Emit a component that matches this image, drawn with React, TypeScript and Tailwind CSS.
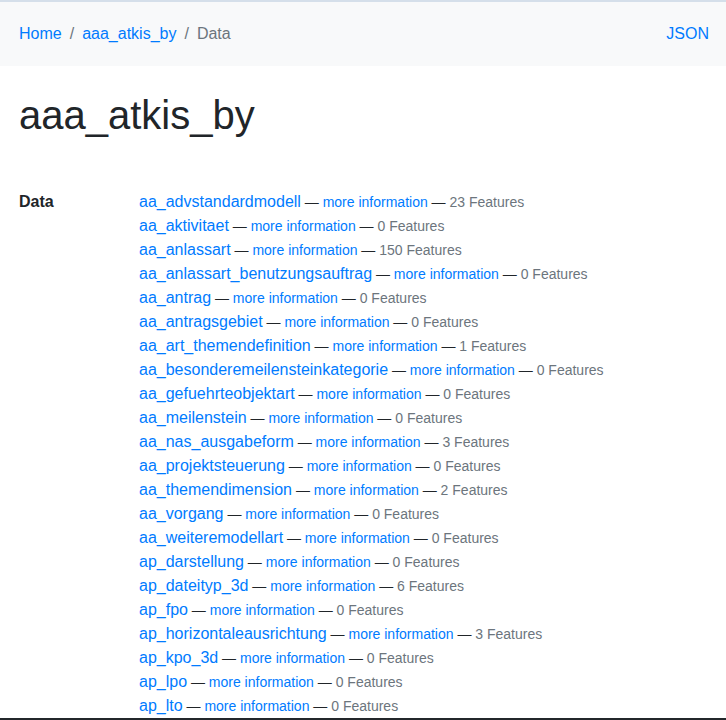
import React from 'react';

interface Collection {
  id: string;
  count: number;
}

const collections: Collection[] = [
  { id: 'aa_advstandardmodell', count: 23 },
  { id: 'aa_aktivitaet', count: 0 },
  { id: 'aa_anlassart', count: 150 },
  { id: 'aa_anlassart_benutzungsauftrag', count: 0 },
  { id: 'aa_antrag', count: 0 },
  { id: 'aa_antragsgebiet', count: 0 },
  { id: 'aa_art_themendefinition', count: 1 },
  { id: 'aa_besonderemeilensteinkategorie', count: 0 },
  { id: 'aa_gefuehrteobjektart', count: 0 },
  { id: 'aa_meilenstein', count: 0 },
  { id: 'aa_nas_ausgabeform', count: 3 },
  { id: 'aa_projektsteuerung', count: 0 },
  { id: 'aa_themendimension', count: 2 },
  { id: 'aa_vorgang', count: 0 },
  { id: 'aa_weiteremodellart', count: 0 },
  { id: 'ap_darstellung', count: 0 },
  { id: 'ap_dateityp_3d', count: 6 },
  { id: 'ap_fpo', count: 0 },
  { id: 'ap_horizontaleausrichtung', count: 3 },
  { id: 'ap_kpo_3d', count: 0 },
  { id: 'ap_lpo', count: 0 },
  { id: 'ap_lto', count: 0 },
];

export default function App() {
  return (
    <div
      className="h-[720px] overflow-hidden border-b-2 border-[#23272b] bg-white text-[#212529]"
      style={{ fontFamily: '"Liberation Sans", Arial, sans-serif' }}
    >
      {/* Breadcrumb */}
      <nav className="flex h-[66px] items-center justify-between border-t-2 border-[#d5dfea] bg-[#f8f9fa] pl-[19px] pr-[17px] text-base">
        <div className="flex items-center">
          <a href="#" className="text-[#007bff]">Home</a>
          <span className="px-2 text-[#6c757d]">/</span>
          <a href="#" className="text-[#007bff]">aaa_atkis_by</a>
          <span className="px-2 text-[#6c757d]">/</span>
          <span className="text-[#6c757d]">Data</span>
        </div>
        <a href="#" className="text-[#007bff]">JSON</a>
      </nav>

      <h1 className="mt-[25px] px-[19px] text-[40px] leading-[48px] font-normal">aaa_atkis_by</h1>

      {/* Collections */}
      <div className="mt-[51px] flex px-[19px]">
        <div className="w-[120px] shrink-0 text-base leading-6 font-bold">Data</div>
        <ul className="flex flex-col">
          {collections.map((c) => (
            <li key={c.id} className="whitespace-nowrap text-base leading-6">
              <a href="#" className="text-[#007bff]">{c.id}</a>
              <span className="text-sm"> — </span>
              <a href="#" className="text-sm text-[#007bff]">more information</a>
              <span className="text-sm"> — </span>
              <span className="text-sm text-[#6c757d]">{c.count} Features</span>
            </li>
          ))}
        </ul>
      </div>
    </div>
  );
}
